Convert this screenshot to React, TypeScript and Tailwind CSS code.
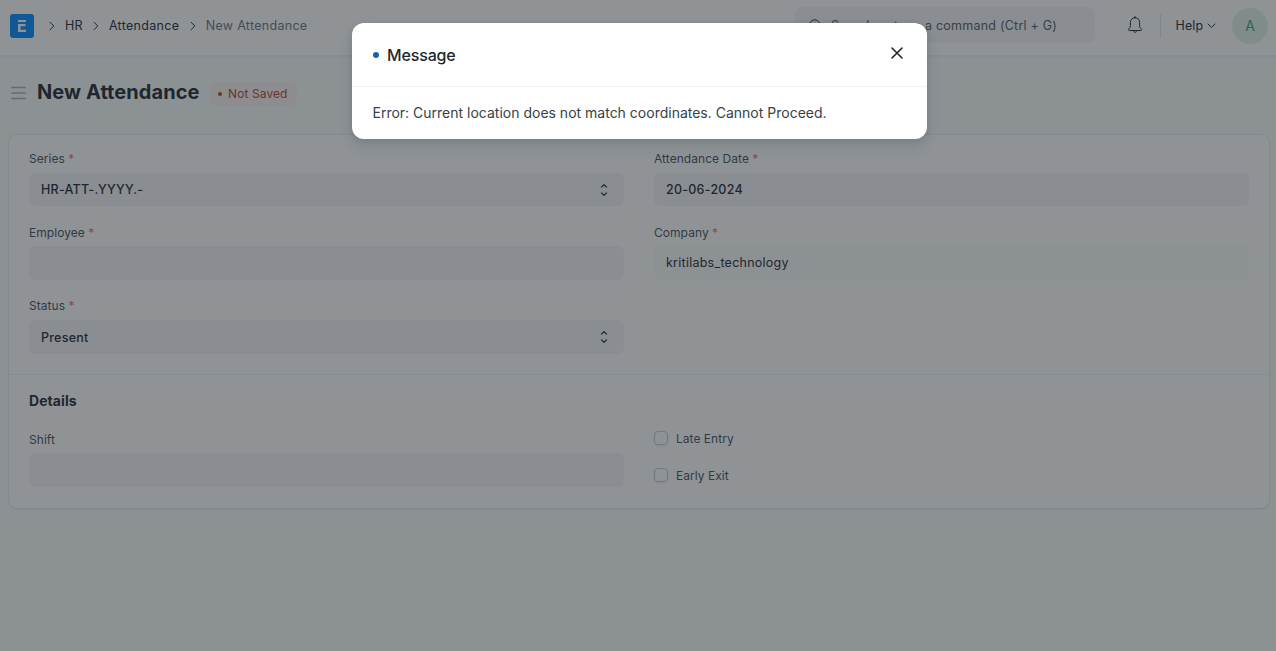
import type { ReactNode } from "react";

function Chevron({ className = "" }: { className?: string }) {
  return (
    <svg className={className} width="6" height="10" viewBox="0 0 6 10" fill="none" stroke="#1f272e" strokeWidth="1" strokeLinecap="round" strokeLinejoin="round">
      <path d="M1 1.2 4.8 5 1 8.8" />
    </svg>
  );
}

function SelectIcon() {
  return (
    <svg className="mt-[1px]" width="8" height="14" viewBox="0 0 8 14" fill="none" stroke="#2f383f" strokeWidth="1.2" strokeLinecap="round" strokeLinejoin="round">
      <path d="M1.5 4 4 1.7 6.5 4M1.5 10 4 12.3 6.5 10" />
    </svg>
  );
}

function Label({ children, required }: { children: ReactNode; required?: boolean }) {
  return (
    <div className="h-[18px] text-[12px] leading-[18px] tracking-[0.05px] text-[#434f5a]">
      {children}
      {required && <span className="text-[#e2707a]"> *</span>}
    </div>
  );
}

function Field({ label, value, required, select, readOnly }: { label: string; value?: string; required?: boolean; select?: boolean; readOnly?: boolean }) {
  return (
    <div className="flex flex-col gap-[4.8px]">
      <Label required={required}>{label}</Label>
      <div
        className={
          "flex h-[33.5px] items-center justify-between rounded-[6px] pr-4 pl-3 text-[12.5px] leading-5 tracking-[0.25px] text-[#1f272e] " +
          (readOnly ? "bg-[#f9fafa]" : "bg-[#f4f2f5] font-medium")
        }
      >
        <span className={select ? "mt-[2px]" : readOnly ? "" : "mt-[1px]"}>{value}</span>
        {select && <SelectIcon />}
      </div>
    </div>
  );
}

function Check({ label }: { label: string }) {
  return (
    <div className="flex h-[18px] items-center gap-2">
      <span className="h-[14px] w-[14px] rounded-[4px] border border-[#c0c6cc] shadow-[0_1px_2px_rgba(0,0,0,0.1)]" />
      <span className="mt-[2px] text-[12px] leading-[18px] tracking-[0.03px] text-[#434f5a]">{label}</span>
    </div>
  );
}

function Navbar() {
  return (
    <header className="flex h-14 items-start border-b border-[#ebeef0] bg-white pr-2 pl-[10px] text-[12.5px] leading-5 tracking-[0.3px] text-[#1f272e] shadow-[0_1px_2px_rgba(25,39,52,0.06)]">
      <div className="flex h-[51px] flex-1 items-center">
        <svg width="24" height="24" viewBox="0 0 24 24" className="mt-[1px]">
          <rect width="24" height="24" rx="3" fill="#0089ff" />
          <path d="M8 6h8v2H8zM8 10h7.5v2.3h-5v3.5H16V18H8z" fill="#fff" />
        </svg>
        <Chevron className="mr-[10px] ml-[15px]" />
        <span className="mt-px">HR</span>
        <Chevron className="mx-[10px]" />
        <span className="mt-px">Attendance</span>
        <Chevron className="mr-[10px] ml-[10.5px]" />
        <span className="mt-px text-[#687178]">New Attendance</span>
      </div>
      <div className="mt-[7px] flex h-9 w-[300px] items-center rounded-lg bg-[#f4f2f5] pl-[14px] text-[#505a62]">
        <svg width="13" height="13" viewBox="0 0 13 13" fill="none" stroke="#1f272e" strokeLinecap="round">
          <circle cx="5.8" cy="6" r="5.2" />
          <path d="m9.5 9.7 3 2.8" />
        </svg>
        <span className="mt-[2px] ml-[9px] tracking-[0.23px]">Search or type a command (Ctrl + G)</span>
      </div>
      <div className="flex h-[51px] items-center">
        <svg className="-mt-px ml-8" width="16" height="18" viewBox="0 0 16 18" fill="none" stroke="#1f272e" strokeWidth="1" strokeLinecap="round" strokeLinejoin="round">
          <path d="M8 1.7c-2.9 0-4.6 2.1-4.6 4.8v3.3c0 1.2-.6 2.3-1.5 3.1-.6.5-.6 1.6.4 1.6h11.4c1 0 1-1.1.4-1.6-.9-.8-1.5-1.9-1.5-3.1V6.5c0-2.7-1.7-4.8-4.6-4.8ZM8 .6v1M6.3 14.7c.2 1 .8 1.6 1.7 1.6s1.5-.6 1.7-1.6" />
        </svg>
        <span className="ml-[17px] h-6 w-px bg-[#dce0e3]" />
        <span className="mt-px ml-[14.5px] w-[27px] tracking-[0.1px]">Help</span>
        <svg className="ml-[4.5px]" width="9" height="6" viewBox="0 0 9 6" fill="none" stroke="#1f272e" strokeLinecap="round" strokeLinejoin="round">
          <path d="M1 1 4.5 4.5 8 1" />
        </svg>
        <span className="ml-4 flex h-9 w-9 items-center justify-center rounded-full bg-[#e0f1ea] text-[14px] tracking-normal text-[#30a66d]">A</span>
      </div>
    </header>
  );
}

function MessageDialog() {
  return (
    <div className="absolute inset-0 flex items-start justify-center bg-[#1f272e]/50 pt-[23px] pl-[3px]">
      <div className="h-[116px] w-[575px] rounded-[12px] bg-white shadow-[0_8px_14px_rgba(25,39,52,0.1),0_2px_6px_rgba(25,39,52,0.12)]">
        <div className="flex h-16 items-center border-b border-[#f0f2f4] pr-6 pl-[21px]">
          <span className="h-[6px] w-[6px] rounded-full bg-[#1366ae]" />
          <h2 className="ml-2 text-[16px] leading-6 font-medium tracking-[-0.15px] text-[#1f272e]">Message</h2>
          <svg className="mb-1 ml-auto" width="12" height="12" viewBox="0 0 12 12" stroke="#1f272e" strokeWidth="1.6" strokeLinecap="round">
            <path d="m1 1 10 10M11 1 1 11" />
          </svg>
        </div>
        <p className="px-[20.5px] pt-[15px] text-[14px] leading-[21px] text-[#38414a]">
          Error: Current location does not match coordinates. Cannot Proceed.
        </p>
      </div>
    </div>
  );
}

export default function App() {
  return (
    <div className="relative h-[651px] w-full overflow-hidden bg-[#f9fafa] font-['Inter',sans-serif]">
      <Navbar />
      <div className="flex h-[79px] items-center pb-[6px] pl-[11px]">
        <svg width="15" height="14" viewBox="0 0 15 14" stroke="#a6adb9" strokeWidth="1.7" strokeLinecap="round">
          <path d="M1 1.5h13M1 7h13M1 12.5h13" />
        </svg>
        <h1 className="-mt-[2px] ml-[11px] text-[20px] leading-7 font-bold tracking-[0.08px] text-[#1f272e]">New Attendance</h1>
        <div className="mt-[2px] ml-[9px] flex h-6 w-[88px] items-center rounded-lg bg-[#fbf1ee] pl-[9.5px] text-[12px] tracking-[0.08px] whitespace-nowrap text-[#b0452a]">
          <span className="mr-[6px] h-1 w-1 rounded-full bg-[#b0452a]" />
          Not Saved
        </div>
      </div>
      <main className="mr-[7px] ml-[9px] h-[373px] rounded-lg bg-white shadow-[0_0_2px_rgba(25,39,52,0.16),0_1px_3px_rgba(25,39,52,0.08)]">
        <section className="grid h-[240px] grid-cols-2 gap-x-[30px] border-b border-[#ebeef0] px-5 pt-[14.8px]">
          <div className="flex flex-col gap-[17.45px]">
            <Field label="Series" value="HR-ATT-.YYYY.-" required select />
            <Field label="Employee" required />
            <Field label="Status" value="Present" required select />
          </div>
          <div className="flex flex-col gap-[17.45px]">
            <Field label="Attendance Date" value="20-06-2024" required />
            <Field label="Company" value="kritilabs_technology" required readOnly />
          </div>
        </section>
        <section className="px-5 pt-[15px]">
          <h3 className="text-[14px] leading-[21px] font-bold tracking-[0.07px] text-[#1f272e]">Details</h3>
          <div className="mt-[19.6px] grid grid-cols-2 gap-x-[30px]">
            <Field label="Shift" />
            <div className="-mt-[1.6px] flex flex-col gap-[19px]">
              <Check label="Late Entry" />
              <Check label="Early Exit" />
            </div>
          </div>
        </section>
      </main>
      <MessageDialog />
    </div>
  );
}
